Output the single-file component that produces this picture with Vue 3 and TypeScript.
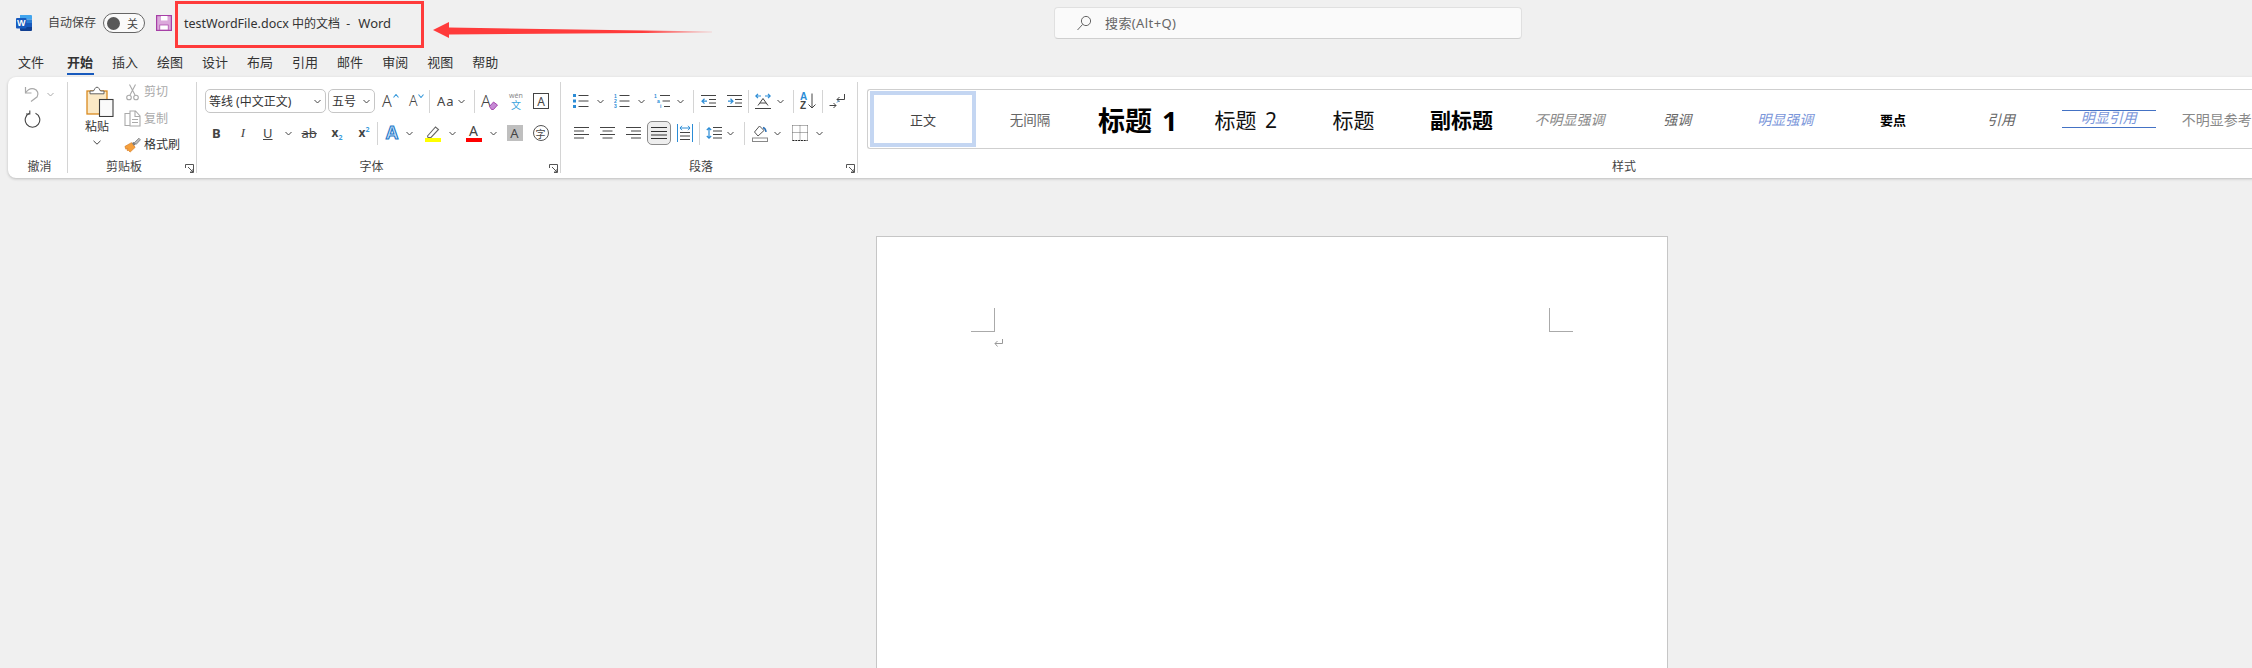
<script setup lang="ts">
const tabs: string[] = ['文件', '开始', '插入', '绘图', '设计', '布局', '引用', '邮件', '审阅', '视图', '帮助']

interface StyleItem {
  label: string
  cls: string
}
const styles: StyleItem[] = [
  { label: '无间隔', cls: 's-nospace' },
  { label: '标题 1', cls: 's-h1' },
  { label: '标题 2', cls: 's-h2' },
  { label: '标题', cls: 's-title' },
  { label: '副标题', cls: 's-sub' },
  { label: '不明显强调', cls: 's-subtle' },
  { label: '强调', cls: 's-em' },
  { label: '明显强调', cls: 's-intense' },
  { label: '要点', cls: 's-strong' },
  { label: '引用', cls: 's-quote' },
  { label: '明显引用', cls: 's-iquote' },
  { label: '不明显参考', cls: 's-ref' },
]
</script>

<template>
  <div class="app">
    <header class="titlebar">
      <div class="tb-left">
        <span class="word">
          <svg width="16" height="16" viewBox="0 0 16 16">
            <path d="M4 0h11a1 1 0 0 1 1 1v3.500H4z" fill="#41a5ee" />
            <path d="M4 4.500h12V8H4z" fill="#2b7cd3" />
            <path d="M4 8h12v4H4z" fill="#185abd" />
            <path d="M4 12h12v3a1 1 0 0 1-1 1H5a1 1 0 0 1-1-1z" fill="#103f91" />
            <rect x="0" y="3" width="10.500" height="10.500" rx="1" fill="#185abd" />
          </svg>
          <b>W</b>
        </span>
        <span class="autosave">自动保存</span>
        <span class="toggle"><i class="knob"></i><em>关</em></span>
        <svg class="save" width="16" height="16" viewBox="0 0 16 16">
          <rect x=".6" y=".6" width="14.800" height="14.800" fill="#dba9db" stroke="#a63fa6" stroke-width="1.200" />
          <rect x="5" y="1" width="6.500" height="4.500" fill="#fff" />
          <rect x="3.800" y="10" width="8.400" height="5" fill="#fff" stroke="#a63fa6" stroke-width=".7" />
        </svg>
        <span class="doc-title"><span class="lat">testWordFile.docx</span> 中的文档&nbsp; - &nbsp;<span class="word-name">Word</span></span>
      </div>
      <div class="search">
        <svg width="16" height="16" viewBox="0 0 16 16" fill="none" stroke="#666" stroke-width="1">
          <circle cx="10" cy="6" r="4.600" />
          <path d="M6.600 9.400 1.500 15" />
        </svg>
        <span>搜索(Alt+Q)</span>
      </div>
    </header>

    <!-- red annotation drawn over the title bar -->
    <div class="annot-box"></div>
    <svg class="annot-arrow" width="290" height="20" viewBox="0 0 290 20">
      <defs>
        <linearGradient id="arrowTail" x1="0" x2="1" y1="0" y2="0">
          <stop offset="0" stop-color="#ff3b3b" />
          <stop offset=".75" stop-color="#ff3b3b" />
          <stop offset="1" stop-color="#ff3b3b" stop-opacity=".15" />
        </linearGradient>
      </defs>
      <path d="M1 10 17 2v5.500L280 11.500v1L17 14.500V18z" fill="url(#arrowTail)" />
    </svg>

    <nav class="tabs">
      <span v-for="t in tabs" :key="t" class="tab" :class="{ active: t === '开始' }">{{ t }}</span>
    </nav>

    <section class="ribbon">
      <!-- undo -->
      <div class="group g-undo">
        <div class="g-body col-undo">
          <div class="undo-row">
            <svg width="16" height="16" viewBox="0 0 16 16" fill="none" stroke="#a8a8a8" stroke-width="1.200">
              <path d="M1.500 1v6h6" />
              <path d="M1.500 7C4 3 7 2 10 2.800c3.500 1 5 5 3.200 8L7 15.500" />
            </svg>
            <svg class="chev" width="7" height="5" viewBox="0 0 7 5" fill="none" stroke="#aaa"><path d="m.5 1 3 3 3-3" /></svg>
          </div>
          <svg class="redo" width="17" height="18" viewBox="0 0 17 18" fill="none" stroke="#444" stroke-width="1.100">
            <path d="M5.500 3.300A7.300 7.300 0 1 0 11.500 3.300" />
            <path d="M5.800 .5V4H2" />
          </svg>
        </div>
        <div class="g-label">撤消</div>
      </div>

      <!-- clipboard -->
      <div class="group g-clip">
        <div class="g-body clip-body">
          <div class="paste">
            <svg width="28" height="31" viewBox="0 0 28 31">
              <rect x="1" y="5" width="20" height="23" fill="#fbe9c6" stroke="#d98a1f" stroke-width="1.300" />
              <path d="M4 5h3.500l1.500-2.500a2.200 2.200 0 0 1 4 0L14.500 5H18v2.800H4z" fill="#fff" stroke="#555" stroke-width=".9" />
              <rect x="13.500" y="13.500" width="13.500" height="17" fill="#fafafa" stroke="#3c3c3c" stroke-width="1.100" />
            </svg>
            <span class="paste-label">粘贴</span>
            <svg class="chev" width="8" height="5" viewBox="0 0 8 5" fill="none" stroke="#444"><path d="m.5.8 3.500 3.400L7.500.8" /></svg>
          </div>
          <div class="clip-list">
            <div class="clip-row off">
              <svg width="16" height="17" viewBox="0 0 16 17" fill="none" stroke="#aaa" stroke-width="1.100">
                <path d="M5 .5 10.500 11M11 .5 5.500 11" />
                <circle cx="4.500" cy="13.500" r="2.300" />
                <circle cx="11.500" cy="13.500" r="2.300" />
              </svg>
              <span>剪切</span>
            </div>
            <div class="clip-row off">
              <svg width="17" height="17" viewBox="0 0 17 17" fill="none" stroke="#aaa" stroke-width="1.100">
                <path d="M6 3.500H1v12h5" />
                <path d="M6 1v15h10V6l-4.500-5zM11 1.500V6.500h5M8 9.500h6M8 12.500h6" />
              </svg>
              <span>复制</span>
            </div>
            <div class="clip-row">
              <svg width="18" height="16" viewBox="0 0 18 16">
                <path d="M1 9.500 8 5.500l3.800 5L6.500 15.500 4.500 13.500l-1 .5L4 11.500 2 12.500z" fill="#f6a03c" stroke="#d4761a" stroke-width=".7" />
                <path d="m8.500 6 2 2.800 1.800-1.400-2-2.600z" fill="#777" />
                <path d="M11 5.500 15.800 .8l1.600 1.700L13 7.300z" fill="#bbb" stroke="#666" stroke-width=".7" />
              </svg>
              <span>格式刷</span>
            </div>
          </div>
        </div>
        <div class="g-label pr16">剪贴板</div>
        <svg class="launcher" width="9" height="9" viewBox="0 0 9 9" fill="none" stroke="#555"><path d="M.5 4V.5h8v8H5M3 3l5 5M5 8h3V5" /></svg>
      </div>

      <!-- font -->
      <div class="group g-font">
        <div class="g-body">
          <div class="row row1 font-r1">
            <div class="combo c-font"><span>等线 (中文正文)</span><svg class="chev" width="7" height="5" viewBox="0 0 7 5" fill="none" stroke="#444"><path d="m.5 1 3 3 3-3" /></svg></div>
            <div class="combo c-size"><span>五号</span><svg class="chev" width="7" height="5" viewBox="0 0 7 5" fill="none" stroke="#444"><path d="m.5 1 3 3 3-3" /></svg></div>
            <span class="ga m7">A<svg class="caret" width="6" height="4" viewBox="0 0 6 4" fill="none" stroke="#3b9bdc" stroke-width="1.100"><path d="m.5 3.500 2.500-3 2.500 3" /></svg></span>
            <span class="ga ga-sm m11">A<svg class="caret" width="6" height="4" viewBox="0 0 6 4" fill="none" stroke="#3b9bdc" stroke-width="1.100"><path d="m.5.500 2.500 3 2.500-3" /></svg></span>
            <span class="sep m6"></span>
            <span class="aa m7">Aa</span>
            <svg class="chev m4" width="7" height="5" viewBox="0 0 7 5" fill="none" stroke="#444"><path d="m.5 1 3 3 3-3" /></svg>
            <span class="sep m9"></span>
            <span class="ga ga-er m6">A<svg class="eraser" width="10" height="9" viewBox="0 0 10 9"><path d="M.5 5.500 4.500 1 8.500 4 4.500 8.500h-2z" fill="#c58ad4" stroke="#a13aa8" stroke-width=".9" /></svg></span>
            <div class="wen m10"><small>wén</small><b>文</b></div>
            <span class="boxed m9">A</span>
          </div>
          <div class="row row2 font-r2">
            <span class="t t-b">B</span>
            <span class="t t-i m20">I</span>
            <span class="t t-u m18">U</span>
            <svg class="chev m12" width="7" height="5" viewBox="0 0 7 5" fill="none" stroke="#444"><path d="m.5 1 3 3 3-3" /></svg>
            <span class="t t-s m10">ab</span>
            <span class="t t-x m14">x<sub>2</sub></span>
            <span class="t t-x m12">x<sup>2</sup></span>
            <span class="sep m3"></span>
            <span class="ga-fx m6">A</span>
            <svg class="chev m5" width="7" height="5" viewBox="0 0 7 5" fill="none" stroke="#444"><path d="m.5 1 3 3 3-3" /></svg>
            <svg class="i m12" width="17" height="17" viewBox="0 0 17 17">
              <path d="M2.500 11 10.500 2l3 2.500-7.500 8H3z" fill="none" stroke="#666" stroke-width="1.100" />
              <rect x="0" y="13" width="16" height="4" fill="#ffff00" />
            </svg>
            <svg class="chev m7" width="7" height="5" viewBox="0 0 7 5" fill="none" stroke="#444"><path d="m.5 1 3 3 3-3" /></svg>
            <span class="ga-col m10">A</span>
            <svg class="chev m8" width="7" height="5" viewBox="0 0 7 5" fill="none" stroke="#444"><path d="m.5 1 3 3 3-3" /></svg>
            <span class="shade m10">A</span>
            <span class="circ m10">字</span>
          </div>
        </div>
        <div class="g-label pr14">字体</div>
        <svg class="launcher" width="9" height="9" viewBox="0 0 9 9" fill="none" stroke="#555"><path d="M.5 4V.5h8v8H5M3 3l5 5M5 8h3V5" /></svg>
      </div>

      <!-- paragraph -->
      <div class="group g-para">
        <div class="g-body">
          <div class="row row1 para-r1">
            <svg class="i" width="16" height="16" viewBox="0 0 16 16"><path d="M5.500 2.500h10M5.500 8h10M5.500 13.500h10" stroke="#444" /><path d="M0 1h3v3H0zM0 6.500h3v3H0zM0 12h3v3H0z" fill="#2b8cd6" /></svg>
            <svg class="chev m8" width="7" height="5" viewBox="0 0 7 5" fill="none" stroke="#444"><path d="m.5 1 3 3 3-3" /></svg>
            <svg class="i m10" width="16" height="16" viewBox="0 0 16 16"><path d="M5.500 2.500h10M5.500 8h10M5.500 13.500h10" stroke="#444" /><text x="0" y="4.500" class="numg">1</text><text x="0" y="10" class="numg">2</text><text x="0" y="15" class="numg">3</text></svg>
            <svg class="chev m8" width="7" height="5" viewBox="0 0 7 5" fill="none" stroke="#444"><path d="m.5 1 3 3 3-3" /></svg>
            <svg class="i m9" width="16" height="16" viewBox="0 0 16 16"><path d="M6 2.500h10M8.500 8H16M10 13.500h6" stroke="#444" /><text x="0" y="4.500" class="numg">1</text><text x="3" y="10" class="numg">a</text><text x="6" y="15" class="numg">i</text></svg>
            <svg class="chev m7" width="7" height="5" viewBox="0 0 7 5" fill="none" stroke="#444"><path d="m.5 1 3 3 3-3" /></svg>
            <span class="sep m9"></span>
            <svg class="i m7" width="15" height="16" viewBox="0 0 15 16"><path d="M0 2.500h15M8 6.500h7M8 10h7M0 13.500h15" stroke="#444" /><path d="M6 8.200H1M3.500 5.800 1 8.200l2.500 2.400" fill="none" stroke="#2b8cd6" stroke-width="1.200" /></svg>
            <svg class="i m11" width="15" height="16" viewBox="0 0 15 16"><path d="M0 2.500h15M8 6.500h7M8 10h7M0 13.500h15" stroke="#444" /><path d="M1 8.200h5M3.500 5.800 6 8.200l-2.500 2.400" fill="none" stroke="#2b8cd6" stroke-width="1.200" /></svg>
            <span class="sep m6"></span>
            <svg class="i m6" width="16" height="16" viewBox="0 0 16 16"><path d="M1 3h5M3 .8.800 3 3 5.200M10 3h5M13 .8 15.200 3 13 5.200" fill="none" stroke="#2b8cd6" stroke-width="1.200" /><path d="M3 12.500 8 5.500l5 7M5 10h6M0 15.500h16" fill="none" stroke="#444" /></svg>
            <svg class="chev m6" width="7" height="5" viewBox="0 0 7 5" fill="none" stroke="#444"><path d="m.5 1 3 3 3-3" /></svg>
            <span class="sep m9"></span>
            <span class="sort m6"><span class="sort-a">A</span><span class="sort-z">Z</span><svg class="sort-arrow" width="8" height="16" viewBox="0 0 8 16" fill="none" stroke="#444"><path d="M4 .5v14.500M.5 11.500 4 15l3.500-3.500" /></svg></span>
            <span class="sep m6"></span>
            <svg class="i m6" width="16" height="16" viewBox="0 0 16 16"><path d="M15.500 1v5.500H8M10.500 4 8 6.500 10.500 9" fill="none" stroke="#444" /><path d="M.5 12.500H7M4.500 10 7 12.500 4.500 15" fill="none" stroke="#444" /><path d="m8 9.500 2-2" stroke="#2b8cd6" /></svg>
          </div>
          <div class="row row2 para-r2">
            <svg class="i" width="15" height="16" viewBox="0 0 15 16"><path d="M0 2.500h15M0 6h10M0 9.500h15M0 13h10" stroke="#444" /></svg>
            <svg class="i m11" width="15" height="16" viewBox="0 0 15 16"><path d="M0 2.500h15M2.500 6h10M0 9.500h15M2.500 13h10" stroke="#444" /></svg>
            <svg class="i m11" width="15" height="16" viewBox="0 0 15 16"><path d="M0 2.500h15M5 6h10M0 9.500h15M5 13h10" stroke="#444" /></svg>
            <span class="just m6"><svg width="16" height="14" viewBox="0 0 16 14"><path d="M0 1.500h16M0 5.500h16M0 9h16M0 12.500h16" stroke="#333" /></svg></span>
            <svg class="i m6" width="16" height="18" viewBox="0 0 16 18"><path d="M.5 0v18M15.500 0v18" stroke="#2b8cd6" /><path d="M3 4h10M5 1.800 3 4l2 2.200M11 1.800 13 4l-2 2.200" fill="none" stroke="#2b8cd6" /><path d="M3 8.500h10M3 12h10M3 15.500h10" stroke="#444" /></svg>
            <span class="sep m6"></span>
            <svg class="i m6" width="16" height="16" viewBox="0 0 16 16"><path d="M3 3v10M.8 5 3 2.800 5.200 5M.8 11 3 13.200 5.200 11" fill="none" stroke="#2b8cd6" stroke-width="1.200" /><path d="M7 2.500h9M7 6h9M7 9.500h9M7 13h9" stroke="#444" /></svg>
            <svg class="chev m5" width="7" height="5" viewBox="0 0 7 5" fill="none" stroke="#444"><path d="m.5 1 3 3 3-3" /></svg>
            <span class="sep m10"></span>
            <svg class="i m7" width="16" height="17" viewBox="0 0 16 17"><path d="M7.500 1 2.500 7l3.500 4 6-5.500z" fill="none" stroke="#555" /><path d="M11 2.500c2.500 1 3 2.500 3 4.500" fill="none" stroke="#2b6fb5" stroke-width="1.400" /><rect x=".5" y="13" width="15" height="3.500" fill="#fff" stroke="#888" /></svg>
            <svg class="chev m6" width="7" height="5" viewBox="0 0 7 5" fill="none" stroke="#444"><path d="m.5 1 3 3 3-3" /></svg>
            <svg class="i m11" width="16" height="16" viewBox="0 0 16 16" fill="none"><path d="M.5.500h15M.5 7.500h15M8 .5v15M.5.500v15M15.500.500v15" stroke="#666" stroke-dasharray="1 1" /><path d="M.5 15.500h15" stroke="#222" stroke-width="1.200" stroke-dasharray="2 .8" /></svg>
            <svg class="chev m8" width="7" height="5" viewBox="0 0 7 5" fill="none" stroke="#444"><path d="m.5 1 3 3 3-3" /></svg>
          </div>
        </div>
        <div class="g-label pr16">段落</div>
        <svg class="launcher" width="9" height="9" viewBox="0 0 9 9" fill="none" stroke="#555"><path d="M.5 4V.5h8v8H5M3 3l5 5M5 8h3V5" /></svg>
      </div>

      <!-- styles -->
      <div class="group g-styles">
        <div class="gallery">
          <div class="style-sel"><span>正文</span></div>
          <div v-for="s in styles" :key="s.label" class="style" :class="s.cls"><span>{{ s.label }}</span></div>
        </div>
        <div class="g-label">样式</div>
      </div>
    </section>

    <main class="canvas">
      <div class="page">
        <div class="marks">
          <span class="crop crop-l"></span>
          <span class="crop crop-r"></span>
        </div>
        <svg class="para-mark" width="9" height="9" viewBox="0 0 9 9" fill="none" stroke="#999"><path d="M8.500 0v4.500H1M3.500 2 1 4.500 3.500 7.500" /></svg>
      </div>
    </main>
  </div>
</template>

<style>
html, body { margin: 0; padding: 0; background: #f0f0f0; }
</style>

<style scoped>
.app {
  position: relative;
  width: 2252px;
  height: 668px;
  overflow: hidden;
  background: #f0f0f0;
  color: #333;
  font-family: "Noto Sans", "Noto Sans CJK SC", sans-serif;
  font-size: 12px;
}
.titlebar { display: flex; align-items: center; height: 46px; padding-left: 16px; }
.tb-left { display: flex; align-items: center; width: 1038px; flex: none; }
.word { position: relative; display: block; width: 16px; height: 16px; flex: none; }
.word svg { display: block; }
.word b {
  position: absolute; left: 0; top: 3px; width: 10.500px; height: 10.500px; text-align: center;
  font: 700 9px/10.500px "Liberation Sans", sans-serif; color: #fff;
}
.autosave { margin-left: 16px; font-size: 12px; color: #444; line-height: 16px; }
.toggle {
  display: flex; align-items: center; box-sizing: border-box;
  margin-left: 7px; width: 42px; height: 20px; border: 1px solid #666; border-radius: 10px; background: #fafafa;
}
.knob { width: 13px; height: 13px; margin-left: 3px; border-radius: 50%; background: #585858; }
.toggle em { margin-left: 7px; font-style: normal; font-size: 11px; color: #444; }
.save { margin-left: 11px; }
.doc-title { margin-left: 12px; font-size: 12px; color: #333; white-space: nowrap; }
.lat { font-size: 12.500px; }
.word-name { margin-left: 2px; font-size: 13px; }
.search {
  display: flex; align-items: center; box-sizing: border-box; flex: none;
  width: 468px; height: 32px; padding: 0 0 1px 21px; gap: 13px;
  background: #fafafa; border: 1px solid #e0e0e0; border-bottom-color: #cfcfcf; border-radius: 4px;
  color: #666; font-size: 13px; letter-spacing: .4px;
}
.annot-box {
  position: absolute; left: 175px; top: 1px; width: 249px; height: 47px;
  box-sizing: border-box; border: 3px solid #ff3b3b;
}
.annot-arrow { position: absolute; left: 432px; top: 20px; }

.tabs { display: flex; gap: 19px; height: 31px; padding-left: 18px; align-items: center; box-sizing: border-box; font-size: 13px; color: #333; }
.tab { position: relative; line-height: 18px; }
.tab.active { font-weight: 700; margin-left: 4px; }
.tab.active::after {
  content: ""; position: absolute; left: 0; right: -1px; top: 20px; height: 2px; background: #185abd;
}

.ribbon {
  display: flex; box-sizing: border-box; margin-left: 8px; width: 2400px; height: 101px;
  background: #fff; border-radius: 8px; box-shadow: 0 1px 3px rgba(0,0,0,.22);
}
.group { position: relative; flex: none; box-sizing: border-box; display: flex; flex-direction: column; height: 91px; margin-top: 5px; border-right: 1px solid #d4d4d4; }
.g-body { flex: 1; }
.g-label { height: 19px; line-height: 19px; margin-bottom: -3px; text-align: center; font-size: 12px; color: #444; }
.pr16 { padding-right: 16px; }
.pr14 { padding-right: 14px; }
.launcher { position: absolute; right: 2px; bottom: 0; }
.g-undo { width: 60px; }
.g-undo .g-label { padding-left: 4px; }
.g-clip { width: 129px; }
.g-font { width: 364px; }
.g-para { width: 297px; }
.g-styles { width: 1532px; border-right: 0; }
.chev { flex: none; display: block; }

.col-undo { display: flex; flex-direction: column; padding-left: 16px; }
.undo-row { display: flex; align-items: center; height: 18px; margin-top: 3px; }
.undo-row .chev { margin-left: 7px; }
.redo { margin-top: 7px; }

.clip-body { display: flex; }
.paste { display: flex; flex-direction: column; align-items: center; width: 34px; margin-left: 12px; padding-top: 4px; flex: none; }
.paste svg:first-child { margin-left: 5px; flex: none; }
.paste-label { font-size: 12px; color: #333; margin-top: 1px; line-height: 18px; white-space: nowrap; }
.paste .chev { margin-top: 4px; }
.clip-list { margin-left: 10px; display: flex; flex-direction: column; gap: 8.500px; padding-top: 1px; }
.clip-row { display: flex; align-items: center; gap: 3px; height: 18px; color: #333; line-height: 18px; }
.clip-row svg { width: 17px; flex: none; }
.clip-row.off { color: #aaa; }

.row { display: flex; align-items: center; }
.row1 { height: 24px; margin-top: 7px; }
.row2 { height: 24px; margin-top: 8px; }
.font-r1 { padding-left: 8px; }
.font-r2 { padding-left: 15px; }
.para-r1 { padding-left: 12px; }
.para-r2 { padding-left: 13px; }
.i { flex: none; display: block; }
.sep { flex: none; width: 1px; height: 23px; background: #d4d4d4; }
.m3 { margin-left: 3px; }
.m4 { margin-left: 4px; } .m5 { margin-left: 5px; } .m6 { margin-left: 6px; } .m7 { margin-left: 7px; }
.m8 { margin-left: 8px; } .m9 { margin-left: 9px; } .m10 { margin-left: 10px; } .m11 { margin-left: 11px; }
.m12 { margin-left: 12px; } .m14 { margin-left: 14px; } .m18 { margin-left: 18px; } .m20 { margin-left: 20px; }

.combo {
  display: flex; align-items: center; justify-content: space-between; box-sizing: border-box;
  height: 24px; padding: 0 4px 0 3px; border: 1px solid #c6c6c6; border-radius: 5px;
  background: #fff; font-size: 12px; color: #333;
}
.c-font { width: 121px; }
.c-size { width: 47px; margin-left: 2px; }

/* text "A" tools */
.ga {
  position: relative; flex: none; display: block; width: 16px; height: 20px;
  font-size: 16px; line-height: 20px; color: #444; font-weight: 300;
}
.ga-sm { width: 14px; font-size: 14px; }
.ga-er { width: 17px; height: 20px; }
.caret { position: absolute; right: -1px; top: 3px; }
.eraser { position: absolute; right: -1px; bottom: 1px; }
.ga-fx {
  flex: none; display: block; width: 17px; height: 20px; text-align: center;
  font: 700 18px/20px "Liberation Sans", sans-serif; color: #cfe6fa;
  -webkit-text-stroke: 1.100px #1f78c8;
}
.ga-col {
  flex: none; display: block; width: 16px; height: 17px; box-sizing: border-box; text-align: center;
  border-bottom: 4px solid #ff0000; font-size: 14px; line-height: 12px; color: #444;
}
.aa { font-size: 13px; letter-spacing: 1px; color: #444; line-height: 16px; width: 17px; white-space: nowrap; }
.wen { display: flex; flex-direction: column; align-items: center; width: 16px; line-height: 8px; }
.wen small { font-size: 7px; color: #888; line-height: 8px; }
.wen b { font-weight: 400; font-size: 10px; color: #3ba4dd; line-height: 10px; }
.boxed {
  display: flex; align-items: center; justify-content: center; box-sizing: border-box;
  width: 16px; height: 16px; border: 1px solid #444; font-size: 12px; color: #444;
}
.t { color: #444; line-height: 16px; font-family: "Noto Sans", sans-serif; }
.t-b { font-weight: 700; font-size: 13px; }
.t-i { font-style: italic; font-size: 13px; font-family: "Liberation Serif", serif; }
.t-u { text-decoration: underline; font-size: 13px; }
.t-s { text-decoration: line-through; font-size: 13px; width: 16px; }
.t-x { font-weight: 700; font-size: 12px; position: relative; width: 15px; white-space: nowrap; }
.t-x sub, .t-x sup { font-size: 7px; line-height: 0; color: #3b9bdc; font-weight: 700; }
.shade {
  display: flex; align-items: center; justify-content: center; width: 16px; height: 16px;
  background: #bfbfbf; color: #444; font-size: 13px;
}
.circ {
  display: flex; align-items: center; justify-content: center; box-sizing: border-box;
  width: 16px; height: 16px; border: 1px solid #555; border-radius: 50%; font-size: 10px; color: #444;
}
.just {
  display: flex; align-items: center; justify-content: center; box-sizing: border-box; flex: none;
  width: 24px; height: 24px; background: #eee; border: 1px solid #8a8a8a; border-radius: 5px;
}
.numg { font: 700 5px "Liberation Sans", sans-serif; fill: #2b8cd6; }
.sort { position: relative; flex: none; display: flex; flex-direction: column; width: 16px; height: 18px; font: 700 10px/9px "Liberation Sans", sans-serif; }
.sort-a { color: #2b8cd6; }
.sort-z { color: #444; }
.sort-arrow { position: absolute; right: 0; top: 1px; }

.gallery {
  display: flex; align-items: stretch; box-sizing: border-box; flex: none; height: 60px;
  margin: 7px 0 0 9px; border: 1px solid #cfcfcf; border-right: 0; border-radius: 3px 0 0 3px; padding: 1px 0 1px 2px;
}
.g-styles .g-label { margin-top: 8px; }
.style-sel {
  display: flex; align-items: center; justify-content: center; box-sizing: border-box; flex: none;
  width: 106px; border: 4px solid #c4d6f2; font-size: 13px; color: #444;
}
.style { display: flex; align-items: center; justify-content: center; flex: none; width: 107.900px; white-space: nowrap; color: #333; }
.s-nospace { font-size: 13.500px; color: #666; }
.s-h1 { font-size: 27px; font-weight: 700; color: #000; word-spacing: 3px; }
.s-h2 { font-size: 21px; color: #111; word-spacing: 3px; }
.s-title { font-size: 21px; color: #111; }
.s-sub { font-size: 21px; font-weight: 700; color: #000; }
.s-subtle { font-size: 14px; font-style: italic; color: #888; }
.s-em { font-size: 14px; font-style: italic; color: #666; }
.s-intense { font-size: 14px; font-style: italic; color: #7a96da; }
.s-strong { font-size: 13px; font-weight: 700; color: #000; }
.s-quote { font-size: 14px; font-style: italic; color: #666; }
.s-iquote { font-size: 14px; font-style: italic; color: #7a96da; }
.s-iquote span { display: block; width: 94px; text-align: center; height: 16px; line-height: 14px; border-top: 1px solid #4472c4; border-bottom: 1px solid #4472c4; }
.s-ref { font-size: 14px; color: #888; }

.canvas { padding-top: 58px; }
.page {
  box-sizing: border-box; width: 792px; height: 500px; margin-left: 876px;
  border: 1px solid #c6c6c6; border-bottom: 0; background: #fff;
  padding: 71px 94px 0;
}
.marks { display: flex; justify-content: space-between; }
.crop { box-sizing: border-box; display: block; width: 24px; height: 24px; }
.crop-l { border-right: 1px solid #aaa; border-bottom: 1px solid #aaa; }
.crop-r { border-left: 1px solid #aaa; border-bottom: 1px solid #aaa; }
.para-mark { display: block; margin: 7px 0 0 23px; }
</style>
